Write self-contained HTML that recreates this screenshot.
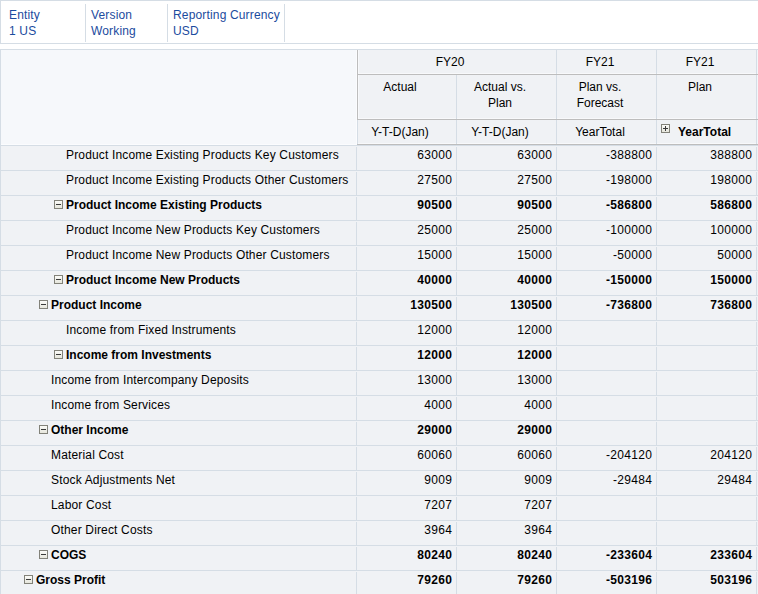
<!DOCTYPE html>
<html><head><meta charset="utf-8"><style>
html,body{margin:0;padding:0;background:#fff;width:758px;height:594px;overflow:hidden}
body{position:relative;font-family:"Liberation Sans",sans-serif;font-size:12px}
body>div{position:absolute}
.t{white-space:nowrap;line-height:16px;height:auto}
.ico{position:absolute;width:7px;height:7px;border:1px solid #828279;background:linear-gradient(#fbfbf8,#e6e6dc)}
.ico i{position:absolute;background:#3a3a3a}
.ico i.h{left:1px;top:3px;width:5px;height:1px}
.ico i.v{left:3px;top:1px;width:1px;height:5px}
</style></head><body>
<div style="left:0px;top:0px;width:758px;height:1px;background:#d5dde5"></div>
<div style="left:0px;top:43px;width:758px;height:1px;background:#d5dde5"></div>
<div style="left:0px;top:0px;width:1px;height:44px;background:#d5dde5"></div>
<div style="left:85px;top:4px;width:1px;height:38px;background:#d5dde5"></div>
<div style="left:167px;top:4px;width:1px;height:38px;background:#d5dde5"></div>
<div style="left:284px;top:4px;width:1px;height:38px;background:#d5dde5"></div>
<div class="t" style="left:9px;top:7px;color:#1b4b9e;letter-spacing:0.16px">Entity</div>
<div class="t" style="left:9px;top:23px;color:#1b4b9e;letter-spacing:0.16px">1 US</div>
<div class="t" style="left:91px;top:7px;color:#1b4b9e;letter-spacing:0.16px">Version</div>
<div class="t" style="left:91px;top:23px;color:#1b4b9e;letter-spacing:0.16px">Working</div>
<div class="t" style="left:173px;top:7px;color:#1b4b9e;letter-spacing:0.16px">Reporting Currency</div>
<div class="t" style="left:173px;top:23px;color:#1b4b9e;letter-spacing:0.16px">USD</div>
<div style="left:0px;top:49px;width:758px;height:1px;background:#d5dde5"></div>
<div style="left:0px;top:49px;width:1px;height:545px;background:#d5dde5"></div>
<div style="left:1px;top:50px;width:356px;height:95px;background:#f6f8fb"></div>
<div style="left:356px;top:50px;width:1px;height:95px;background:#fbfcfe"></div>
<div style="left:1px;top:144px;width:356px;height:1px;background:#fbfcfe"></div>
<div style="left:357px;top:50px;width:401px;height:95px;background:#f0f2f5"></div>
<div style="left:757px;top:50px;width:1px;height:95px;background:#f4f6f9"></div>
<div style="left:358px;top:50px;width:1px;height:69px;background:#f8f9fb"></div>
<div style="left:358px;top:73px;width:398px;height:1px;background:#f8f9fb"></div>
<div style="left:358px;top:118px;width:398px;height:1px;background:#f8f9fb"></div>
<div style="left:358px;top:143px;width:398px;height:1px;background:#f8f9fb"></div>
<div style="left:456px;top:75px;width:1px;height:70px;background:#d5dde5"></div>
<div style="left:556px;top:50px;width:1px;height:95px;background:#d5dde5"></div>
<div style="left:656px;top:50px;width:1px;height:95px;background:#d5dde5"></div>
<div style="left:756px;top:50px;width:1px;height:95px;background:#d5dde5"></div>
<div style="left:357px;top:50px;width:1px;height:70px;background:#bdbdbd"></div>
<div style="left:357px;top:120px;width:1px;height:25px;background:#d5dde5"></div>
<div style="left:357px;top:74px;width:401px;height:1px;background:#bdbdbd"></div>
<div style="left:357px;top:119px;width:401px;height:1px;background:#bdbdbd"></div>
<div style="left:357px;top:144px;width:401px;height:1px;background:#bdbdbd"></div>
<div class="t" style="left:350px;width:200px;top:54px;text-align:center;color:#000">FY20</div>
<div class="t" style="left:500px;width:200px;top:54px;text-align:center;color:#000">FY21</div>
<div class="t" style="left:600px;width:200px;top:54px;text-align:center;color:#000">FY21</div>
<div class="t" style="left:300px;width:200px;top:79px;text-align:center;color:#000">Actual</div>
<div class="t" style="left:400px;width:200px;top:79px;text-align:center;color:#000">Actual vs.<br>Plan</div>
<div class="t" style="left:500px;width:200px;top:79px;text-align:center;color:#000">Plan vs.<br>Forecast</div>
<div class="t" style="left:600px;width:200px;top:79px;text-align:center;color:#000">Plan</div>
<div class="t" style="left:300px;width:200px;top:124px;text-align:center;color:#000">Y-T-D(Jan)</div>
<div class="t" style="left:400px;width:200px;top:124px;text-align:center;color:#000">Y-T-D(Jan)</div>
<div class="t" style="left:500px;width:200px;top:124px;text-align:center;color:#000">YearTotal</div>
<div class="ico" style="left:661px;top:124px"><i class="h"></i><i class="v"></i></div>
<div class="t" style="left:678px;top:124px;color:#000;font-weight:bold">YearTotal</div>
<div style="left:1px;top:146px;width:757px;height:25px;background:#f0f2f5"></div>
<div style="left:1px;top:145px;width:757px;height:1px;background:#d5dde5"></div>
<div style="left:356px;top:147px;width:1px;height:24px;background:#d5dde5"></div>
<div style="left:456px;top:147px;width:1px;height:24px;background:#d5dde5"></div>
<div style="left:556px;top:147px;width:1px;height:24px;background:#d5dde5"></div>
<div style="left:656px;top:147px;width:1px;height:24px;background:#d5dde5"></div>
<div style="left:756px;top:147px;width:1px;height:24px;background:#d5dde5"></div>
<div class="t" style="left:66px;top:147px;color:#000;letter-spacing:0.16px">Product Income Existing Products Key Customers</div>
<div class="t" style="right:305.67px;top:147px;text-align:right;color:#000;letter-spacing:0.33px;">63000</div>
<div class="t" style="right:205.66999999999996px;top:147px;text-align:right;color:#000;letter-spacing:0.33px;">63000</div>
<div class="t" style="right:105.66999999999996px;top:147px;text-align:right;color:#000;letter-spacing:0.33px;">-388800</div>
<div class="t" style="right:5.669999999999959px;top:147px;text-align:right;color:#000;letter-spacing:0.33px;">388800</div>
<div style="left:1px;top:171px;width:757px;height:25px;background:#f0f2f5"></div>
<div style="left:1px;top:170px;width:757px;height:1px;background:#d5dde5"></div>
<div style="left:356px;top:172px;width:1px;height:24px;background:#d5dde5"></div>
<div style="left:456px;top:172px;width:1px;height:24px;background:#d5dde5"></div>
<div style="left:556px;top:172px;width:1px;height:24px;background:#d5dde5"></div>
<div style="left:656px;top:172px;width:1px;height:24px;background:#d5dde5"></div>
<div style="left:756px;top:172px;width:1px;height:24px;background:#d5dde5"></div>
<div class="t" style="left:66px;top:172px;color:#000;letter-spacing:0.16px">Product Income Existing Products Other Customers</div>
<div class="t" style="right:305.67px;top:172px;text-align:right;color:#000;letter-spacing:0.33px;">27500</div>
<div class="t" style="right:205.66999999999996px;top:172px;text-align:right;color:#000;letter-spacing:0.33px;">27500</div>
<div class="t" style="right:105.66999999999996px;top:172px;text-align:right;color:#000;letter-spacing:0.33px;">-198000</div>
<div class="t" style="right:5.669999999999959px;top:172px;text-align:right;color:#000;letter-spacing:0.33px;">198000</div>
<div style="left:1px;top:196px;width:757px;height:25px;background:#f0f2f5"></div>
<div style="left:1px;top:195px;width:757px;height:1px;background:#d5dde5"></div>
<div style="left:356px;top:197px;width:1px;height:24px;background:#d5dde5"></div>
<div style="left:456px;top:197px;width:1px;height:24px;background:#d5dde5"></div>
<div style="left:556px;top:197px;width:1px;height:24px;background:#d5dde5"></div>
<div style="left:656px;top:197px;width:1px;height:24px;background:#d5dde5"></div>
<div style="left:756px;top:197px;width:1px;height:24px;background:#d5dde5"></div>
<div class="ico" style="left:54px;top:200px"><i class="h"></i></div>
<div class="t" style="left:66px;top:197px;color:#000;font-weight:bold">Product Income Existing Products</div>
<div class="t" style="right:305.67px;top:197px;text-align:right;color:#000;letter-spacing:0.33px;font-weight:bold">90500</div>
<div class="t" style="right:205.66999999999996px;top:197px;text-align:right;color:#000;letter-spacing:0.33px;font-weight:bold">90500</div>
<div class="t" style="right:105.66999999999996px;top:197px;text-align:right;color:#000;letter-spacing:0.33px;font-weight:bold">-586800</div>
<div class="t" style="right:5.669999999999959px;top:197px;text-align:right;color:#000;letter-spacing:0.33px;font-weight:bold">586800</div>
<div style="left:1px;top:221px;width:757px;height:25px;background:#f0f2f5"></div>
<div style="left:1px;top:220px;width:757px;height:1px;background:#d5dde5"></div>
<div style="left:356px;top:222px;width:1px;height:24px;background:#d5dde5"></div>
<div style="left:456px;top:222px;width:1px;height:24px;background:#d5dde5"></div>
<div style="left:556px;top:222px;width:1px;height:24px;background:#d5dde5"></div>
<div style="left:656px;top:222px;width:1px;height:24px;background:#d5dde5"></div>
<div style="left:756px;top:222px;width:1px;height:24px;background:#d5dde5"></div>
<div class="t" style="left:66px;top:222px;color:#000;letter-spacing:0.16px">Product Income New Products Key Customers</div>
<div class="t" style="right:305.67px;top:222px;text-align:right;color:#000;letter-spacing:0.33px;">25000</div>
<div class="t" style="right:205.66999999999996px;top:222px;text-align:right;color:#000;letter-spacing:0.33px;">25000</div>
<div class="t" style="right:105.66999999999996px;top:222px;text-align:right;color:#000;letter-spacing:0.33px;">-100000</div>
<div class="t" style="right:5.669999999999959px;top:222px;text-align:right;color:#000;letter-spacing:0.33px;">100000</div>
<div style="left:1px;top:246px;width:757px;height:25px;background:#f0f2f5"></div>
<div style="left:1px;top:245px;width:757px;height:1px;background:#d5dde5"></div>
<div style="left:356px;top:247px;width:1px;height:24px;background:#d5dde5"></div>
<div style="left:456px;top:247px;width:1px;height:24px;background:#d5dde5"></div>
<div style="left:556px;top:247px;width:1px;height:24px;background:#d5dde5"></div>
<div style="left:656px;top:247px;width:1px;height:24px;background:#d5dde5"></div>
<div style="left:756px;top:247px;width:1px;height:24px;background:#d5dde5"></div>
<div class="t" style="left:66px;top:247px;color:#000;letter-spacing:0.16px">Product Income New Products Other Customers</div>
<div class="t" style="right:305.67px;top:247px;text-align:right;color:#000;letter-spacing:0.33px;">15000</div>
<div class="t" style="right:205.66999999999996px;top:247px;text-align:right;color:#000;letter-spacing:0.33px;">15000</div>
<div class="t" style="right:105.66999999999996px;top:247px;text-align:right;color:#000;letter-spacing:0.33px;">-50000</div>
<div class="t" style="right:5.669999999999959px;top:247px;text-align:right;color:#000;letter-spacing:0.33px;">50000</div>
<div style="left:1px;top:271px;width:757px;height:25px;background:#f0f2f5"></div>
<div style="left:1px;top:270px;width:757px;height:1px;background:#d5dde5"></div>
<div style="left:356px;top:272px;width:1px;height:24px;background:#d5dde5"></div>
<div style="left:456px;top:272px;width:1px;height:24px;background:#d5dde5"></div>
<div style="left:556px;top:272px;width:1px;height:24px;background:#d5dde5"></div>
<div style="left:656px;top:272px;width:1px;height:24px;background:#d5dde5"></div>
<div style="left:756px;top:272px;width:1px;height:24px;background:#d5dde5"></div>
<div class="ico" style="left:54px;top:275px"><i class="h"></i></div>
<div class="t" style="left:66px;top:272px;color:#000;font-weight:bold">Product Income New Products</div>
<div class="t" style="right:305.67px;top:272px;text-align:right;color:#000;letter-spacing:0.33px;font-weight:bold">40000</div>
<div class="t" style="right:205.66999999999996px;top:272px;text-align:right;color:#000;letter-spacing:0.33px;font-weight:bold">40000</div>
<div class="t" style="right:105.66999999999996px;top:272px;text-align:right;color:#000;letter-spacing:0.33px;font-weight:bold">-150000</div>
<div class="t" style="right:5.669999999999959px;top:272px;text-align:right;color:#000;letter-spacing:0.33px;font-weight:bold">150000</div>
<div style="left:1px;top:296px;width:757px;height:25px;background:#f0f2f5"></div>
<div style="left:1px;top:295px;width:757px;height:1px;background:#d5dde5"></div>
<div style="left:356px;top:297px;width:1px;height:24px;background:#d5dde5"></div>
<div style="left:456px;top:297px;width:1px;height:24px;background:#d5dde5"></div>
<div style="left:556px;top:297px;width:1px;height:24px;background:#d5dde5"></div>
<div style="left:656px;top:297px;width:1px;height:24px;background:#d5dde5"></div>
<div style="left:756px;top:297px;width:1px;height:24px;background:#d5dde5"></div>
<div class="ico" style="left:39px;top:300px"><i class="h"></i></div>
<div class="t" style="left:51px;top:297px;color:#000;font-weight:bold">Product Income</div>
<div class="t" style="right:305.67px;top:297px;text-align:right;color:#000;letter-spacing:0.33px;font-weight:bold">130500</div>
<div class="t" style="right:205.66999999999996px;top:297px;text-align:right;color:#000;letter-spacing:0.33px;font-weight:bold">130500</div>
<div class="t" style="right:105.66999999999996px;top:297px;text-align:right;color:#000;letter-spacing:0.33px;font-weight:bold">-736800</div>
<div class="t" style="right:5.669999999999959px;top:297px;text-align:right;color:#000;letter-spacing:0.33px;font-weight:bold">736800</div>
<div style="left:1px;top:321px;width:757px;height:25px;background:#f0f2f5"></div>
<div style="left:1px;top:320px;width:757px;height:1px;background:#d5dde5"></div>
<div style="left:356px;top:322px;width:1px;height:24px;background:#d5dde5"></div>
<div style="left:456px;top:322px;width:1px;height:24px;background:#d5dde5"></div>
<div style="left:556px;top:322px;width:1px;height:24px;background:#d5dde5"></div>
<div style="left:656px;top:322px;width:1px;height:24px;background:#d5dde5"></div>
<div style="left:756px;top:322px;width:1px;height:24px;background:#d5dde5"></div>
<div class="t" style="left:66px;top:322px;color:#000;letter-spacing:0.16px">Income from Fixed Instruments</div>
<div class="t" style="right:305.67px;top:322px;text-align:right;color:#000;letter-spacing:0.33px;">12000</div>
<div class="t" style="right:205.66999999999996px;top:322px;text-align:right;color:#000;letter-spacing:0.33px;">12000</div>
<div style="left:1px;top:346px;width:757px;height:25px;background:#f0f2f5"></div>
<div style="left:1px;top:345px;width:757px;height:1px;background:#d5dde5"></div>
<div style="left:356px;top:347px;width:1px;height:24px;background:#d5dde5"></div>
<div style="left:456px;top:347px;width:1px;height:24px;background:#d5dde5"></div>
<div style="left:556px;top:347px;width:1px;height:24px;background:#d5dde5"></div>
<div style="left:656px;top:347px;width:1px;height:24px;background:#d5dde5"></div>
<div style="left:756px;top:347px;width:1px;height:24px;background:#d5dde5"></div>
<div class="ico" style="left:54px;top:350px"><i class="h"></i></div>
<div class="t" style="left:66px;top:347px;color:#000;font-weight:bold">Income from Investments</div>
<div class="t" style="right:305.67px;top:347px;text-align:right;color:#000;letter-spacing:0.33px;font-weight:bold">12000</div>
<div class="t" style="right:205.66999999999996px;top:347px;text-align:right;color:#000;letter-spacing:0.33px;font-weight:bold">12000</div>
<div style="left:1px;top:371px;width:757px;height:25px;background:#f0f2f5"></div>
<div style="left:1px;top:370px;width:757px;height:1px;background:#d5dde5"></div>
<div style="left:356px;top:372px;width:1px;height:24px;background:#d5dde5"></div>
<div style="left:456px;top:372px;width:1px;height:24px;background:#d5dde5"></div>
<div style="left:556px;top:372px;width:1px;height:24px;background:#d5dde5"></div>
<div style="left:656px;top:372px;width:1px;height:24px;background:#d5dde5"></div>
<div style="left:756px;top:372px;width:1px;height:24px;background:#d5dde5"></div>
<div class="t" style="left:51px;top:372px;color:#000;letter-spacing:0.16px">Income from Intercompany Deposits</div>
<div class="t" style="right:305.67px;top:372px;text-align:right;color:#000;letter-spacing:0.33px;">13000</div>
<div class="t" style="right:205.66999999999996px;top:372px;text-align:right;color:#000;letter-spacing:0.33px;">13000</div>
<div style="left:1px;top:396px;width:757px;height:25px;background:#f0f2f5"></div>
<div style="left:1px;top:395px;width:757px;height:1px;background:#d5dde5"></div>
<div style="left:356px;top:397px;width:1px;height:24px;background:#d5dde5"></div>
<div style="left:456px;top:397px;width:1px;height:24px;background:#d5dde5"></div>
<div style="left:556px;top:397px;width:1px;height:24px;background:#d5dde5"></div>
<div style="left:656px;top:397px;width:1px;height:24px;background:#d5dde5"></div>
<div style="left:756px;top:397px;width:1px;height:24px;background:#d5dde5"></div>
<div class="t" style="left:51px;top:397px;color:#000;letter-spacing:0.16px">Income from Services</div>
<div class="t" style="right:305.67px;top:397px;text-align:right;color:#000;letter-spacing:0.33px;">4000</div>
<div class="t" style="right:205.66999999999996px;top:397px;text-align:right;color:#000;letter-spacing:0.33px;">4000</div>
<div style="left:1px;top:421px;width:757px;height:25px;background:#f0f2f5"></div>
<div style="left:1px;top:420px;width:757px;height:1px;background:#d5dde5"></div>
<div style="left:356px;top:422px;width:1px;height:24px;background:#d5dde5"></div>
<div style="left:456px;top:422px;width:1px;height:24px;background:#d5dde5"></div>
<div style="left:556px;top:422px;width:1px;height:24px;background:#d5dde5"></div>
<div style="left:656px;top:422px;width:1px;height:24px;background:#d5dde5"></div>
<div style="left:756px;top:422px;width:1px;height:24px;background:#d5dde5"></div>
<div class="ico" style="left:39px;top:425px"><i class="h"></i></div>
<div class="t" style="left:51px;top:422px;color:#000;font-weight:bold">Other Income</div>
<div class="t" style="right:305.67px;top:422px;text-align:right;color:#000;letter-spacing:0.33px;font-weight:bold">29000</div>
<div class="t" style="right:205.66999999999996px;top:422px;text-align:right;color:#000;letter-spacing:0.33px;font-weight:bold">29000</div>
<div style="left:1px;top:446px;width:757px;height:25px;background:#f0f2f5"></div>
<div style="left:1px;top:445px;width:757px;height:1px;background:#d5dde5"></div>
<div style="left:356px;top:447px;width:1px;height:24px;background:#d5dde5"></div>
<div style="left:456px;top:447px;width:1px;height:24px;background:#d5dde5"></div>
<div style="left:556px;top:447px;width:1px;height:24px;background:#d5dde5"></div>
<div style="left:656px;top:447px;width:1px;height:24px;background:#d5dde5"></div>
<div style="left:756px;top:447px;width:1px;height:24px;background:#d5dde5"></div>
<div class="t" style="left:51px;top:447px;color:#000;letter-spacing:0.16px">Material Cost</div>
<div class="t" style="right:305.67px;top:447px;text-align:right;color:#000;letter-spacing:0.33px;">60060</div>
<div class="t" style="right:205.66999999999996px;top:447px;text-align:right;color:#000;letter-spacing:0.33px;">60060</div>
<div class="t" style="right:105.66999999999996px;top:447px;text-align:right;color:#000;letter-spacing:0.33px;">-204120</div>
<div class="t" style="right:5.669999999999959px;top:447px;text-align:right;color:#000;letter-spacing:0.33px;">204120</div>
<div style="left:1px;top:471px;width:757px;height:25px;background:#f0f2f5"></div>
<div style="left:1px;top:470px;width:757px;height:1px;background:#d5dde5"></div>
<div style="left:356px;top:472px;width:1px;height:24px;background:#d5dde5"></div>
<div style="left:456px;top:472px;width:1px;height:24px;background:#d5dde5"></div>
<div style="left:556px;top:472px;width:1px;height:24px;background:#d5dde5"></div>
<div style="left:656px;top:472px;width:1px;height:24px;background:#d5dde5"></div>
<div style="left:756px;top:472px;width:1px;height:24px;background:#d5dde5"></div>
<div class="t" style="left:51px;top:472px;color:#000;letter-spacing:0.16px">Stock Adjustments Net</div>
<div class="t" style="right:305.67px;top:472px;text-align:right;color:#000;letter-spacing:0.33px;">9009</div>
<div class="t" style="right:205.66999999999996px;top:472px;text-align:right;color:#000;letter-spacing:0.33px;">9009</div>
<div class="t" style="right:105.66999999999996px;top:472px;text-align:right;color:#000;letter-spacing:0.33px;">-29484</div>
<div class="t" style="right:5.669999999999959px;top:472px;text-align:right;color:#000;letter-spacing:0.33px;">29484</div>
<div style="left:1px;top:496px;width:757px;height:25px;background:#f0f2f5"></div>
<div style="left:1px;top:495px;width:757px;height:1px;background:#d5dde5"></div>
<div style="left:356px;top:497px;width:1px;height:24px;background:#d5dde5"></div>
<div style="left:456px;top:497px;width:1px;height:24px;background:#d5dde5"></div>
<div style="left:556px;top:497px;width:1px;height:24px;background:#d5dde5"></div>
<div style="left:656px;top:497px;width:1px;height:24px;background:#d5dde5"></div>
<div style="left:756px;top:497px;width:1px;height:24px;background:#d5dde5"></div>
<div class="t" style="left:51px;top:497px;color:#000;letter-spacing:0.16px">Labor Cost</div>
<div class="t" style="right:305.67px;top:497px;text-align:right;color:#000;letter-spacing:0.33px;">7207</div>
<div class="t" style="right:205.66999999999996px;top:497px;text-align:right;color:#000;letter-spacing:0.33px;">7207</div>
<div style="left:1px;top:521px;width:757px;height:25px;background:#f0f2f5"></div>
<div style="left:1px;top:520px;width:757px;height:1px;background:#d5dde5"></div>
<div style="left:356px;top:522px;width:1px;height:24px;background:#d5dde5"></div>
<div style="left:456px;top:522px;width:1px;height:24px;background:#d5dde5"></div>
<div style="left:556px;top:522px;width:1px;height:24px;background:#d5dde5"></div>
<div style="left:656px;top:522px;width:1px;height:24px;background:#d5dde5"></div>
<div style="left:756px;top:522px;width:1px;height:24px;background:#d5dde5"></div>
<div class="t" style="left:51px;top:522px;color:#000;letter-spacing:0.16px">Other Direct Costs</div>
<div class="t" style="right:305.67px;top:522px;text-align:right;color:#000;letter-spacing:0.33px;">3964</div>
<div class="t" style="right:205.66999999999996px;top:522px;text-align:right;color:#000;letter-spacing:0.33px;">3964</div>
<div style="left:1px;top:546px;width:757px;height:25px;background:#f0f2f5"></div>
<div style="left:1px;top:545px;width:757px;height:1px;background:#d5dde5"></div>
<div style="left:356px;top:547px;width:1px;height:24px;background:#d5dde5"></div>
<div style="left:456px;top:547px;width:1px;height:24px;background:#d5dde5"></div>
<div style="left:556px;top:547px;width:1px;height:24px;background:#d5dde5"></div>
<div style="left:656px;top:547px;width:1px;height:24px;background:#d5dde5"></div>
<div style="left:756px;top:547px;width:1px;height:24px;background:#d5dde5"></div>
<div class="ico" style="left:39px;top:550px"><i class="h"></i></div>
<div class="t" style="left:51px;top:547px;color:#000;font-weight:bold">COGS</div>
<div class="t" style="right:305.67px;top:547px;text-align:right;color:#000;letter-spacing:0.33px;font-weight:bold">80240</div>
<div class="t" style="right:205.66999999999996px;top:547px;text-align:right;color:#000;letter-spacing:0.33px;font-weight:bold">80240</div>
<div class="t" style="right:105.66999999999996px;top:547px;text-align:right;color:#000;letter-spacing:0.33px;font-weight:bold">-233604</div>
<div class="t" style="right:5.669999999999959px;top:547px;text-align:right;color:#000;letter-spacing:0.33px;font-weight:bold">233604</div>
<div style="left:1px;top:571px;width:757px;height:25px;background:#f0f2f5"></div>
<div style="left:1px;top:570px;width:757px;height:1px;background:#d5dde5"></div>
<div style="left:356px;top:572px;width:1px;height:24px;background:#d5dde5"></div>
<div style="left:456px;top:572px;width:1px;height:24px;background:#d5dde5"></div>
<div style="left:556px;top:572px;width:1px;height:24px;background:#d5dde5"></div>
<div style="left:656px;top:572px;width:1px;height:24px;background:#d5dde5"></div>
<div style="left:756px;top:572px;width:1px;height:24px;background:#d5dde5"></div>
<div class="ico" style="left:24px;top:575px"><i class="h"></i></div>
<div class="t" style="left:36px;top:572px;color:#000;font-weight:bold">Gross Profit</div>
<div class="t" style="right:305.67px;top:572px;text-align:right;color:#000;letter-spacing:0.33px;font-weight:bold">79260</div>
<div class="t" style="right:205.66999999999996px;top:572px;text-align:right;color:#000;letter-spacing:0.33px;font-weight:bold">79260</div>
<div class="t" style="right:105.66999999999996px;top:572px;text-align:right;color:#000;letter-spacing:0.33px;font-weight:bold">-503196</div>
<div class="t" style="right:5.669999999999959px;top:572px;text-align:right;color:#000;letter-spacing:0.33px;font-weight:bold">503196</div>
</body></html>
